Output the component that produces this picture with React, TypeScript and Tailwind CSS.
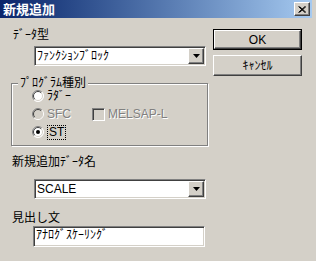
import React from 'react'

const raised =
  'border border-t-white border-l-white border-b-[#404040] border-r-[#404040] shadow-[inset_-1px_-1px_0_#808080,inset_1px_1px_0_#d4d0c8]'
const sunken =
  'border border-t-[#808080] border-l-[#808080] border-b-white border-r-white shadow-[inset_1px_1px_0_#404040,inset_-1px_-1px_0_#d4d0c8]'

function Radio({ checked = false, disabled = false }: { checked?: boolean; disabled?: boolean }) {
  return (
    <svg width="12" height="12" viewBox="0 0 12 12" className="shrink-0">
      <circle cx="6" cy="6" r="5.5" fill={disabled ? '#d4d0c8' : '#ffffff'} />
      <path d="M2.1 9.9 A5.5 5.5 0 0 1 9.9 2.1" stroke="#808080" fill="none" />
      <path d="M9.9 2.1 A5.5 5.5 0 0 1 2.1 9.9" stroke="#ffffff" fill="none" />
      <path d="M2.8 9.2 A4.5 4.5 0 0 1 9.2 2.8" stroke="#404040" fill="none" />
      <path d="M9.2 2.8 A4.5 4.5 0 0 1 2.8 9.2" stroke="#d4d0c8" fill="none" />
      {checked && <circle cx="6" cy="6" r="2" fill="#000" />}
    </svg>
  )
}

function Combo({ value, latin = false }: { value: string; latin?: boolean }) {
  return (
    <div className={`ml-[34px] w-[172px] h-[20px] flex ${sunken} p-[1px]`}>
      <div className={`flex-1 bg-white pl-[1px] leading-[16px] ${latin ? 'text-[12px]' : ''}`}>{value}</div>
      <div className={`w-[16px] h-[16px] bg-[#d4d0c8] flex items-center justify-center ${raised}`}>
        <svg width="7" height="4" viewBox="0 0 7 4">
          <path d="M0 0H7L3.5 4Z" fill="#000" />
        </svg>
      </div>
    </div>
  )
}

export default function App() {
  return (
    <div className="w-[316px] h-[261px] bg-[#d4d0c8] overflow-hidden text-[12px] text-black font-['Liberation_Sans','Noto_Sans_CJK_JP',sans-serif]">
      {/* Title bar */}
      <div className="h-[18px] mr-[4px] flex items-center bg-gradient-to-r from-[#0a246a] to-[#a6caf0]">
        <span className="pl-[3px] text-white font-bold text-[13px] leading-[18px] font-['Noto_Sans_CJK_JP',sans-serif]">
          新規追加
        </span>
        <div className={`ml-auto mr-[2px] w-[16px] h-[14px] bg-[#d4d0c8] flex items-center justify-center ${raised}`}>
          <svg width="8" height="7" viewBox="0 0 8 7">
            <path d="M0.5 0.5L7 6.5M1.5 0.5L8 6.5M7 0.5L0.5 6.5M8 0.5L1.5 6.5" stroke="#000" strokeWidth="1" />
          </svg>
        </div>
      </div>

      <div className="flex">
        {/* Left column */}
        <div className="w-[210px]">
          <div className="mt-[10px] pl-[13px] leading-[14px]">ﾃﾞｰﾀ型</div>
          <div className="mt-[4px]">
            <Combo value="ﾌｧﾝｸｼｮﾝﾌﾞﾛｯｸ" />
          </div>

          {/* Program type group */}
          <div className="relative mt-[17px] ml-[11px] w-[197px] h-[63px] border border-[#808080] shadow-[inset_1px_1px_0_#fff,1px_1px_0_#fff]">
            <span className="absolute -top-[8px] left-[6px] px-[2px] bg-[#d4d0c8] leading-[14px]">ﾌﾟﾛｸﾞﾗﾑ種別</span>
            <div className="pt-[3px] pl-[20px]">
              <div className="h-[18px] flex items-center gap-[3px]">
                <Radio />
                <span className="leading-[14px]">ﾗﾀﾞｰ</span>
              </div>
              <div className="h-[18px] flex items-center">
                <Radio disabled />
                <span className="ml-[3px] w-[45px] leading-[14px] text-[#808080] [text-shadow:1px_1px_0_#fff]">SFC</span>
                <div className="w-[13px] h-[13px] border border-t-[#808080] border-l-[#808080] border-b-white border-r-white shadow-[inset_1px_1px_0_#404040,inset_-1px_-1px_0_#d4d0c8]" />
                <span className="ml-[3px] leading-[14px] text-[#808080] [text-shadow:1px_1px_0_#fff]">MELSAP-L</span>
              </div>
              <div className="h-[18px] flex items-center gap-[3px]">
                <Radio checked />
                <span className="leading-[13px] border border-dotted border-black px-[1px]">ST</span>
              </div>
            </div>
          </div>

          <div className="mt-[9px] pl-[12px] leading-[14px]">新規追加ﾃﾞｰﾀ名</div>
          <div className="mt-[10px]">
            <Combo value="SCALE" latin />
          </div>
          <div className="mt-[12px] pl-[12px] leading-[14px]">見出し文</div>
          <div className={`mt-[1px] ml-[33px] w-[172px] h-[21px] bg-white ${sunken} pl-[2px] leading-[17px]`}>
            ｱﾅﾛｸﾞｽｹｰﾘﾝｸﾞ
          </div>
        </div>

        {/* Buttons */}
        <div className="pt-[11px] pl-[3px]">
          <div className="w-[89px] h-[21px] border border-black">
            <div className={`h-full flex items-center justify-center ${raised}`}>OK</div>
          </div>
          <div className={`mt-[5px] w-[89px] h-[21px] flex items-center justify-center ${raised}`}>ｷｬﾝｾﾙ</div>
        </div>
      </div>
    </div>
  )
}
